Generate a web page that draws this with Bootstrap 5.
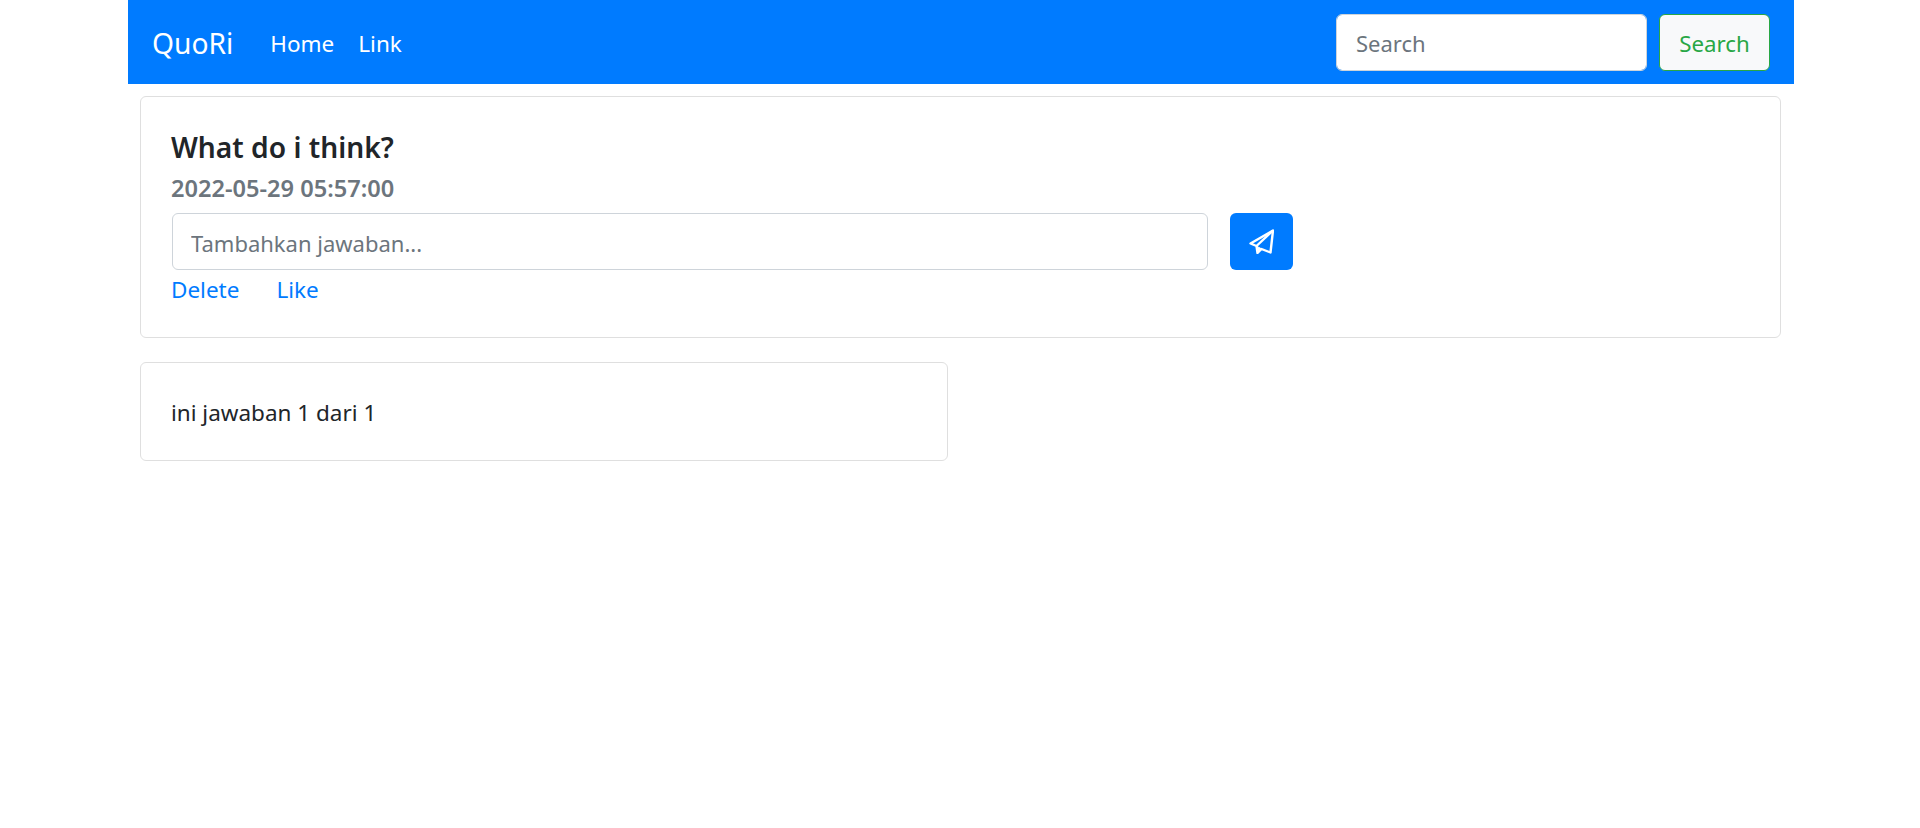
<!doctype html>
<html lang="en">
<head>
<meta charset="utf-8">
<title>QuoRi</title>
<link href="https://cdn.jsdelivr.net/npm/bootstrap@5.3.0/dist/css/bootstrap.min.css" rel="stylesheet">
<style>
body{font-family:"Noto Sans","Open Sans",sans-serif;font-size:22.5px;background:#fff;color:#212529}
.page-wrap{width:1666px;margin-left:128px}
.top-bar{background:#007bff;height:84px;padding:14px 24px}
.top-bar .navbar-brand{font-size:28.2px;color:#fff;padding:0;margin-right:25px;position:relative;top:1px}
.top-bar.navbar-expand .navbar-nav .nav-link{color:#fff;font-size:22.5px;padding:3px 12px 0;line-height:34px}
.tall-field{height:57px;font-size:22px;padding:7px 19px 5px;border-radius:6px;border:1px solid #ced4da}
.tall-field::placeholder{color:#6c757d}
.search-field{width:311px}
.search-btn{height:57px;width:111px;font-size:22.3px;padding:3px 0 0;color:#28a745;background:#f8f9fa;border:1px solid #28a745;border-radius:6px}
.main-card{margin:12px 13px 0 12px;border:1px solid #dfdfdf;border-radius:6px;height:242px;padding:33px 30px}
.q-title{font-size:28.2px;font-weight:600;line-height:34px;margin:0 0 10px}
.q-date{font-size:23.6px;font-weight:600;color:#6c757d;line-height:28px;margin:0 0 11px}
.answer-row{gap:22px;margin-left:1px}
.answer-field{width:1036px;flex:none;padding-left:18px}
.send-btn{width:63px;height:57px;background:#007bff;border:0;border-radius:6px;padding:0}
.act-links{gap:37px;line-height:30px;margin-top:5px}
.act-links a{color:#007bff;text-decoration:none}
.answer-card{margin:24px 0 0 12px;width:808px;height:99px;border:1px solid #dfdfdf;border-radius:6px;padding:35px 30px}
.answer-card p{margin:0;line-height:30px}
</style>
</head>
<body>
<div class="page-wrap">
  <nav class="navbar navbar-expand top-bar">
    <a class="navbar-brand" href="#">QuoRi</a>
    <ul class="navbar-nav me-auto">
      <li class="nav-item"><a class="nav-link" href="#">Home</a></li>
      <li class="nav-item"><a class="nav-link" href="#">Link</a></li>
    </ul>
    <form class="d-flex search-form">
      <input class="form-control tall-field search-field me-2" type="search" placeholder="Search">
      <button class="btn search-btn ms-1" type="button">Search</button>
    </form>
  </nav>
  <div class="main-card bg-white">
    <h5 class="q-title">What do i think?</h5>
    <h6 class="q-date">2022-05-29 05:57:00</h6>
    <div class="d-flex answer-row">
      <input class="form-control tall-field answer-field" type="text" placeholder="Tambahkan jawaban...">
      <button class="btn send-btn d-flex align-items-center justify-content-center" type="button" aria-label="Send">
        <svg width="25" height="25" viewBox="0 0 25 25" fill="none" stroke="#fff" stroke-width="2.4" stroke-linejoin="round"><path d="M24 1.5 1.5 14.5 7.5 17 8.5 24 12.5 20 21.5 23.5Z"/><path d="M24 1.5 7.5 17"/><path d="M8 17.5 8.5 23 12 19.5Z" fill="#fff" stroke-width="1"/></svg>
      </button>
    </div>
    <div class="d-flex act-links">
      <a href="#">Delete</a>
      <a href="#">Like</a>
    </div>
  </div>
  <div class="answer-card bg-white">
    <p>ini jawaban 1 dari 1</p>
  </div>
</div>
</body>
</html>
